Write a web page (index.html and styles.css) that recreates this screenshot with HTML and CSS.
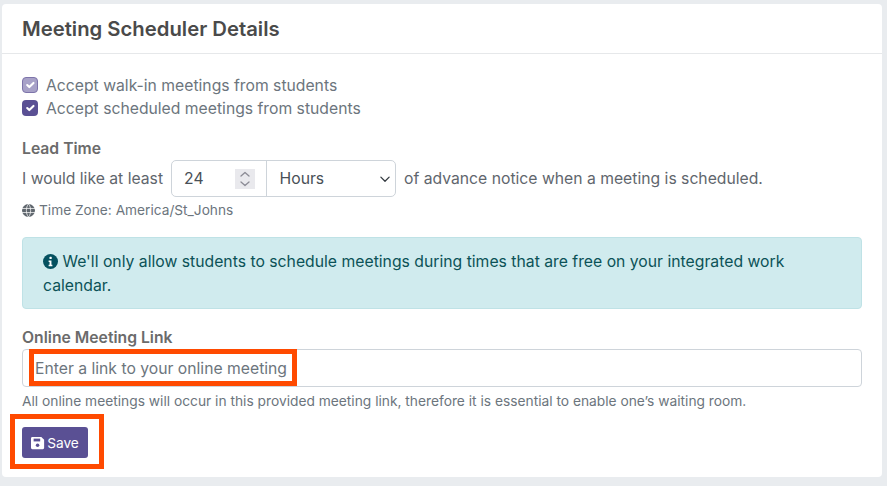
FILE: index.html
```html
<!DOCTYPE html>
<html lang="en">
<head>
<meta charset="utf-8">
<title>Meeting Scheduler Details</title>
<link rel="stylesheet" href="styles.css">
</head>
<body>
<main class="card">
  <header class="card-header"><h1>Meeting Scheduler Details</h1></header>
  <div class="card-body">
    <div class="checks">
      <label class="check"><span class="box box-disabled"><svg viewBox="0 0 20 20" width="14" height="14"><path d="M6 10l3 3 6-6" fill="none" stroke="#fff" stroke-width="3" stroke-linecap="round" stroke-linejoin="round"/></svg></span>Accept walk-in meetings from students</label>
      <label class="check"><span class="box"><svg viewBox="0 0 20 20" width="14" height="14"><path d="M6 10l3 3 6-6" fill="none" stroke="#fff" stroke-width="3" stroke-linecap="round" stroke-linejoin="round"/></svg></span>Accept scheduled meetings from students</label>
    </div>
    <div class="lead-title">Lead Time</div>
    <div class="lead-row">
      <span>I would like at least</span>
      <div class="group">
        <div class="num"><span>24</span><span class="spin"><svg viewBox="0 0 20 20" width="20" height="20"><path d="M6 7l4-3.500 4 3.500M6 13l4 3.500 4-3.500" fill="none" stroke="#8b8b95" stroke-width="1.300" stroke-linecap="round" stroke-linejoin="round"/></svg></span></div>
        <div class="sel"><span>Hours</span><svg viewBox="0 0 16 16" width="12" height="12"><path d="M2.500 5.500L8 11l5.500-5.500" fill="none" stroke="#343a40" stroke-width="1.700" stroke-linecap="round" stroke-linejoin="round"/></svg></div>
      </div>
      <span>of advance notice when a meeting is scheduled.</span>
    </div>
    <div class="tz"><svg viewBox="0 0 16 16" width="13" height="13"><circle cx="8" cy="8" r="8" fill="#5f666d"/><path d="M0 5.500h16M0 10.500h16M8 0C4.500 4 4.500 12 8 16M8 0c3.500 4 3.500 12 0 16" fill="none" stroke="#fff" stroke-width=".9"/></svg><span>Time Zone: America/St_Johns</span></div>
    <div class="alert"><svg class="info" viewBox="0 0 16 16" width="15" height="15"><circle cx="8" cy="8" r="8" fill="#055160"/><rect x="6.900" y="3" width="2.400" height="2.400" rx=".6" fill="#fff"/><path d="M6 7h3v4.500h1v1.500H6v-1.500h1V8.500H6z" fill="#fff"/></svg> We'll only allow students to schedule meetings during times that are free on your integrated work calendar.</div>
    <label class="link-label" for="link">Online Meeting Link</label>
    <input class="link-input" id="link" type="text" placeholder="Enter a link to your online meeting">
    <p class="help">All online meetings will occur in this provided meeting link, therefore it is essential to enable one’s waiting room.</p>
    <button class="save" type="button"><svg viewBox="0 0 16 16" width="14" height="14"><path d="M1.500 1h10.300L15 4.200v9.300c0 .8-.7 1.500-1.500 1.500h-12C.7 15 0 14.300 0 13.500v-11C0 1.700.7 1 1.500 1z" fill="#fff"/><rect x="3" y="3" width="7.500" height="3.200" fill="#5a5094"/><circle cx="7.500" cy="10.500" r="2" fill="#5a5094"/></svg>Save</button>
  </div>
</main>
<div class="mark mark-input"></div>
<div class="mark mark-save"></div>
</body>
</html>
```
FILE: styles.css
```css
* { box-sizing: border-box; }
html, body { height: 100%; }
body {
  margin: 0;
  padding: 4px 5px 9px 2px;
  background: #e9ecef;
  font-family: Inter, "Liberation Sans", sans-serif;
  font-size: 16px;
  color: #6c757d;
  overflow: hidden;
  position: relative;
}
.card {
  height: 473px;
  background: #fff;
  border-radius: 4px;
}
.card-header {
  height: 50px;
  padding: 0 20px;
  border-bottom: 1px solid #e6e8ea;
  display: flex;
  align-items: center;
}
h1 {
  margin: 0;
  font-size: 20.300px;
  font-weight: 600;
  color: #4a4a4a;
}
.card-body { padding: 20px 20px 0; }
.checks { display: flex; flex-direction: column; gap: 1px; }
.check {
  display: flex;
  align-items: center;
  gap: 8px;
  height: 22px;
  font-size: 15.730px;
  color: #6c757d;
}
.box {
  width: 16px;
  height: 16px;
  border-radius: 4px;
  background: #5a5094;
  display: flex;
  align-items: center;
  justify-content: center;
}
.box-disabled { background: #a8a2c8; border: 1px solid #7d74aa; }
.lead-title {
  margin-top: 20px;
  font-size: 15.730px;
  font-weight: 600;
  color: #6b6b6b;
  line-height: 20px;
}
.lead-row {
  margin-top: 1px;
  display: flex;
  align-items: center;
  gap: 8px;
  font-size: 15.730px;
  color: #5f666d;
}
.group {
  width: 225px;
  height: 37px;
  display: flex;
  border: 1px solid #ced4da;
  border-radius: 5px;
}
.num {
  width: 95px;
  border-right: 1px solid #ced4da;
  display: flex;
  align-items: center;
  justify-content: space-between;
  padding: 0 11px 0 12px;
  color: #495057;
}
.spin { width: 20px; height: 20px; background: #e9e9ed; display: block; }
.spin svg { display: block; }
.sel {
  flex: 1;
  display: flex;
  align-items: center;
  justify-content: space-between;
  padding: 0 4px 0 12.500px;
  color: #495057;
}
.tz {
  margin-top: 3px;
  display: flex;
  align-items: center;
  gap: 4px;
  font-size: 13.700px;
  line-height: 20px;
  color: #6c757d;
}
.alert {
  margin-top: 17px;
  height: 72px;
  padding: 12px 20px;
  background: #d0ebee;
  border: 1px solid #bfe2e6;
  border-radius: 4px;
  font-size: 15.750px;
  line-height: 24px;
  color: #0b5257;
}
.info { vertical-align: -2px; }
.link-label {
  display: block;
  margin-top: 18px;
  font-size: 15.730px;
  font-weight: 600;
  line-height: 22px;
  color: #6b6b6b;
}
.link-input {
  display: block;
  margin-top: 0;
  width: 100%;
  height: 38px;
  padding: 0 12px;
  border: 1px solid #ced4da;
  border-radius: 4px;
  font: inherit;
  font-size: 15.730px;
  background: #fff;
}
.link-input::placeholder { color: #6c757d; opacity: 1; }
.help {
  margin: 4px 0 0;
  font-size: 13.780px;
  line-height: 20px;
  color: #6c757d;
}
.save {
  margin-top: 16px;
  width: 66px;
  height: 31px;
  padding: 0;
  border: 0;
  border-radius: 3px;
  background: #5a5094;
  color: #fff;
  font: inherit;
  font-size: 13.700px;
  display: flex;
  align-items: center;
  justify-content: center;
  gap: 2px;
}
.mark { position: absolute; border: 5px solid #ff4a00; }
.mark-input { left: 29px; top: 349px; width: 268px; height: 37px; }
.mark-save { left: 10px; top: 414px; width: 94px; height: 55px; }
```
